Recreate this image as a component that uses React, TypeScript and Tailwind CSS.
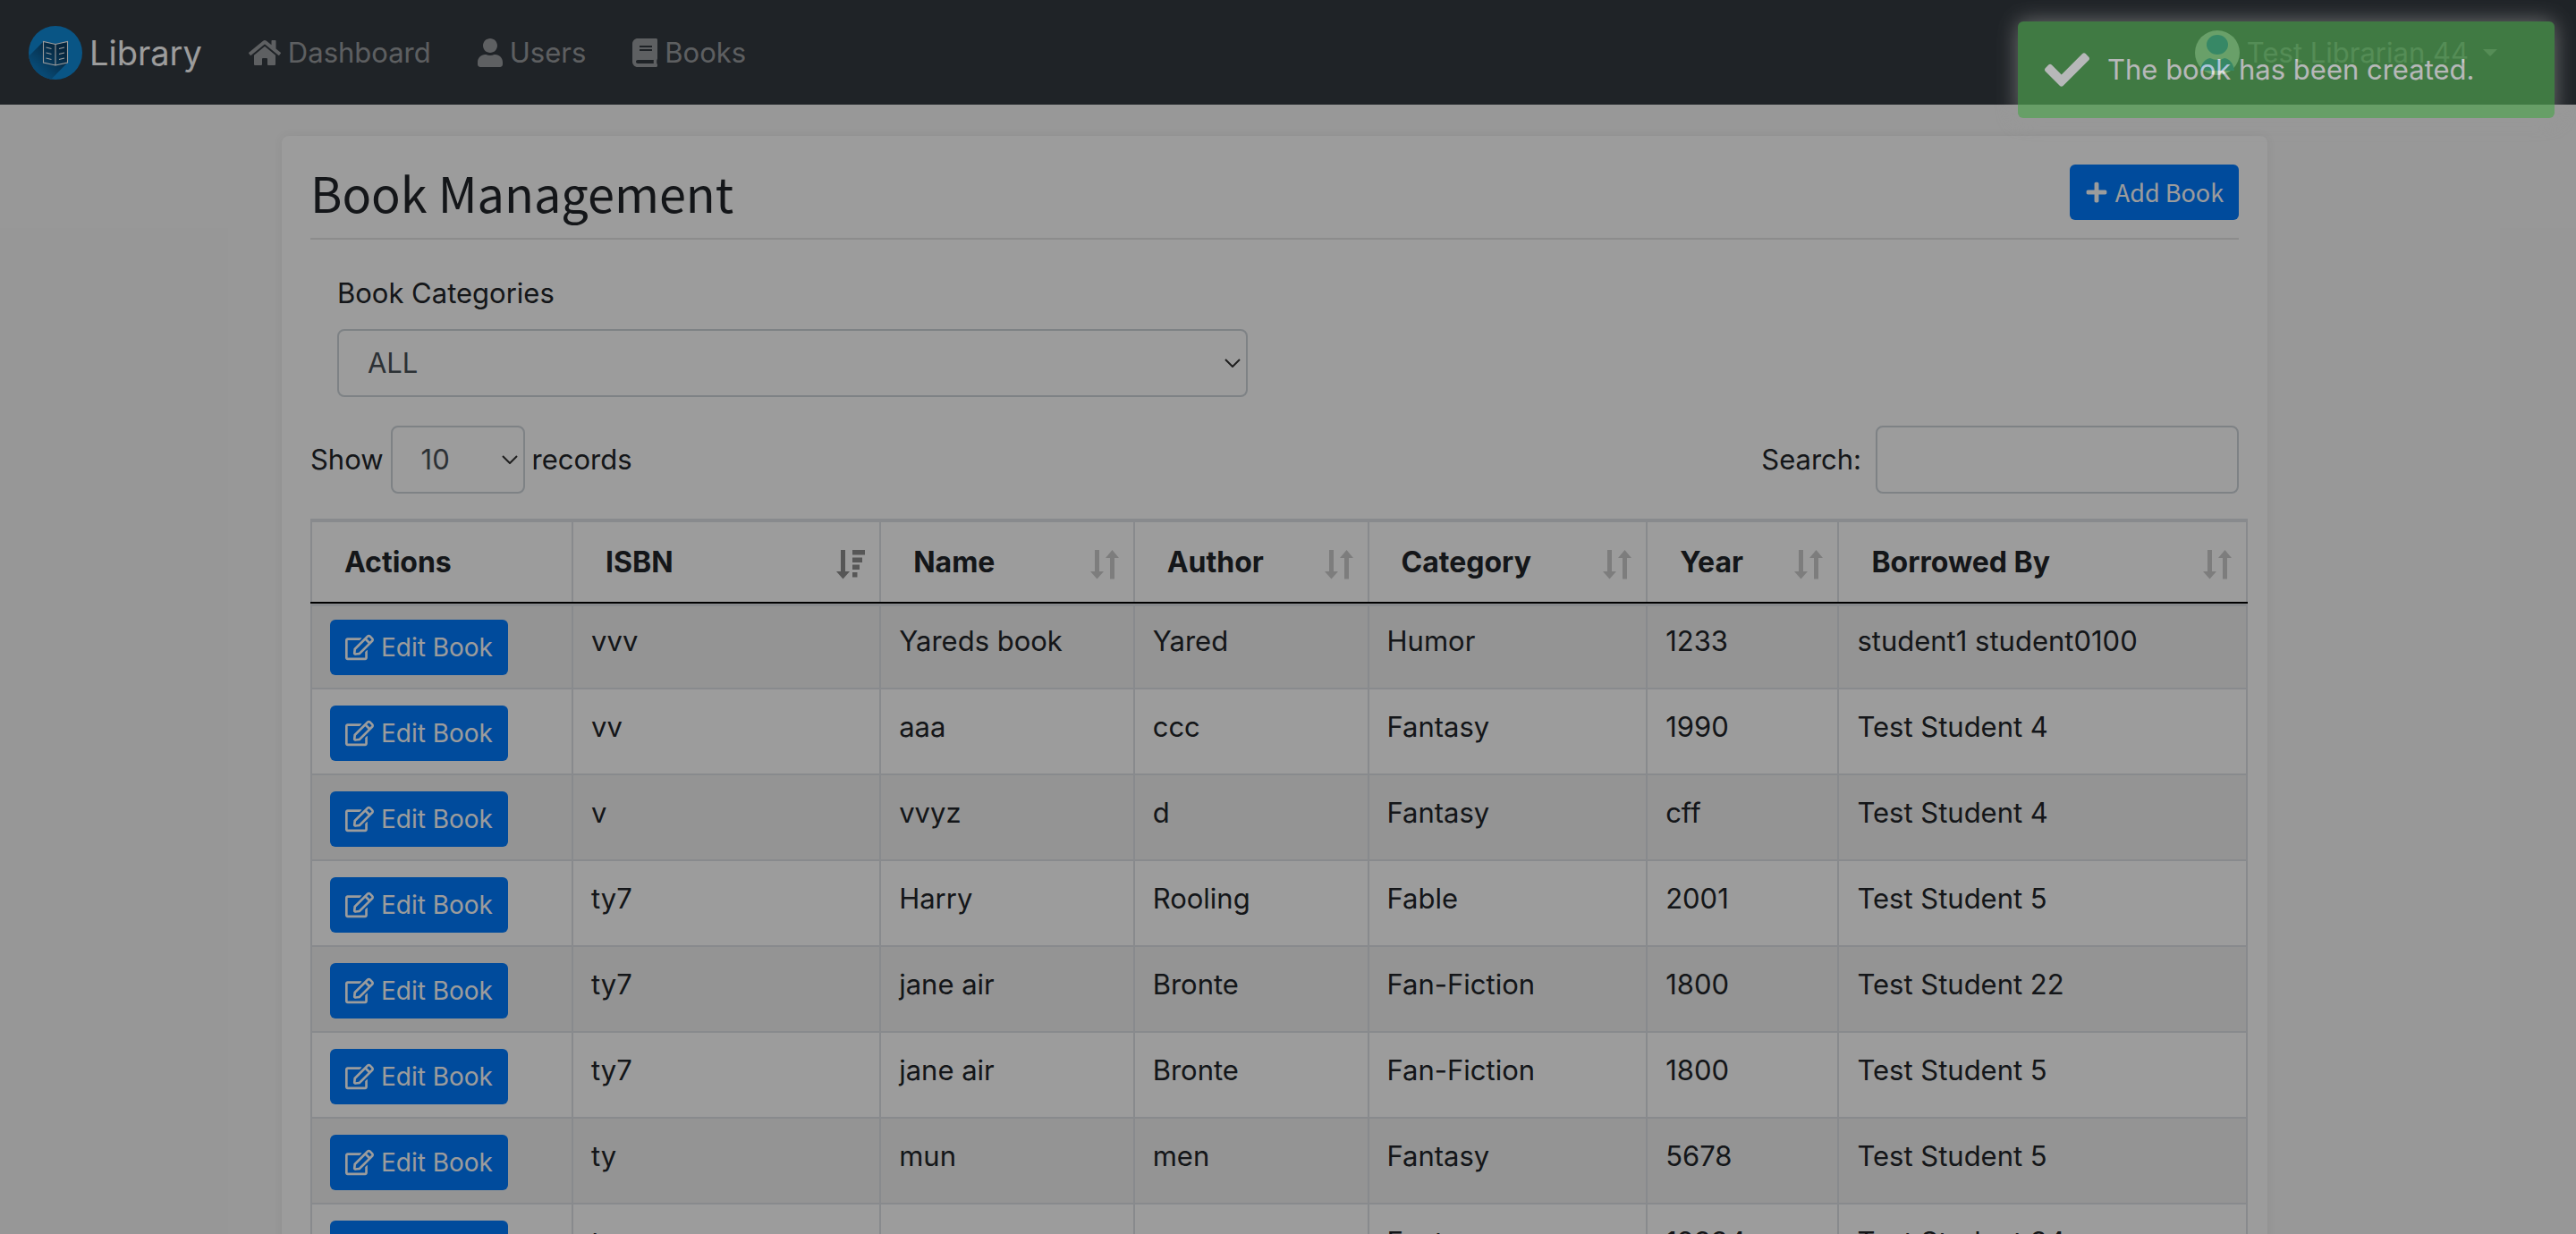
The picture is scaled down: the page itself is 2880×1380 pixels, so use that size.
import type { ReactNode } from "react";
import {
  FaBook,
  FaCheck,
  FaHome,
  FaPlus,
  FaRegEdit,
  FaUser,
} from "react-icons/fa";

type Book = {
  isbn: string;
  name: string;
  author: string;
  category: string;
  year: string;
  borrower: string;
};

const books: Book[] = [
  { isbn: "vvv", name: "Yareds book", author: "Yared", category: "Humor", year: "1233", borrower: "student1 student0100" },
  { isbn: "vv", name: "aaa", author: "ccc", category: "Fantasy", year: "1990", borrower: "Test Student 4" },
  { isbn: "v", name: "vvyz", author: "d", category: "Fantasy", year: "cff", borrower: "Test Student 4" },
  { isbn: "ty7", name: "Harry", author: "Rooling", category: "Fable", year: "2001", borrower: "Test Student 5" },
  { isbn: "ty7", name: "jane air", author: "Bronte", category: "Fan-Fiction", year: "1800", borrower: "Test Student 22" },
  { isbn: "ty7", name: "jane air", author: "Bronte", category: "Fan-Fiction", year: "1800", borrower: "Test Student 5" },
  { isbn: "ty", name: "mun", author: "men", category: "Fantasy", year: "5678", borrower: "Test Student 5" },
  { isbn: "tx", name: "sun", author: "sen", category: "Fantasy", year: "12334", borrower: "Test Student 34" },
];

const columns = [
  { label: "Actions", width: "w-[13.5%]", sort: "none" },
  { label: "ISBN", width: "w-[15.9%]", sort: "desc" },
  { label: "Name", width: "w-[13.1%]", sort: "both" },
  { label: "Author", width: "w-[12.1%]", sort: "both" },
  { label: "Category", width: "w-[14.4%]", sort: "both" },
  { label: "Year", width: "w-[9.9%]", sort: "both" },
  { label: "Borrowed By", width: "w-[21.1%]", sort: "both" },
];

function Logo() {
  return (
    <svg viewBox="0 0 60 60" className="size-15" aria-hidden="true">
      <defs>
        <linearGradient id="logo-shadow" gradientUnits="userSpaceOnUse" x1="34" y1="26" x2="12" y2="50">
          <stop offset="0" stopColor="#0a3f66" />
          <stop offset="1" stopColor="#0e78bd" />
        </linearGradient>
        <clipPath id="logo-clip">
          <circle cx="30" cy="30" r="30" />
        </clipPath>
      </defs>
      <circle cx="30" cy="30" r="30" fill="#108bda" />
      <path d="M16.500 17.500 L30 20.500 L43.500 17.500 V41 L24 61 H0 V34 Z" fill="url(#logo-shadow)" clipPath="url(#logo-clip)" />
      <g fill="none" stroke="#fff" strokeWidth="1.1">
        <path d="M30 20.500 L16.500 17.500 V41 L30 44 L43.500 41 V17.500 Z M30 20.500 V44" />
        <path d="M19.500 24 l6 1.500 M19.500 30 l6 1.500 M19.500 36 l6 1.500 M40 24 l-6 1.500 M40 30 l-6 1.500 M40 36 l-6 1.500" />
      </g>
    </svg>
  );
}

function Avatar() {
  return (
    <svg viewBox="0 0 50 50" className="size-[50px]" aria-hidden="true">
      <circle cx="25" cy="25" r="25" fill="#fff" />
      <ellipse cx="25" cy="16" rx="12" ry="11" fill="#0082f0" />
      <path d="M6 45 C7 37 11 32 17 31 Q25 35 33 31 C39 32 43 37 44 45 Z" fill="#0082f0" />
    </svg>
  );
}

function SortBoth() {
  return (
    <svg viewBox="0 0 32 34" className="mt-1 h-[34px] w-8 text-[#cdcdcd]" fill="currentColor" aria-hidden="true">
      <path d="M5 1h5v24h5l-7.500 8.500L0 25h5zM22 33.500h5V10h5L24.500 1 17 10h5z" />
    </svg>
  );
}

function SortDesc() {
  return (
    <svg viewBox="0 0 32 34" className="mt-1 h-[34px] w-8 text-[#8f8f8f]" fill="currentColor" aria-hidden="true">
      <path d="M5 1h5v24h5l-7.500 8.500L0 25h5zM18 1h14v5.500H18zM18 9.500h11V15H18zM18 17.500h8V23h-8zM18 26h5.500v5.500H18z" />
    </svg>
  );
}

function NavLink({ icon, children }: { icon: ReactNode; children: ReactNode }) {
  return (
    <a href="#" className="flex items-center gap-2 text-white/50">
      {icon}
      {children}
    </a>
  );
}

function Chevron() {
  return (
    <svg viewBox="0 0 18 10" className="pointer-events-none absolute top-1/2 right-2 h-2.5 w-[18px] -translate-y-1/2" fill="none" stroke="#333" strokeWidth="2" aria-hidden="true">
      <path d="M1 1l8 8 8-8" />
    </svg>
  );
}

const field = "h-[76px] rounded-lg border-2 border-[#ced4da] bg-white text-[#495057]";

export default function App() {
  return (
    <div className="relative h-screen overflow-hidden bg-[#f8f8f8] font-['Inter','Liberation_Sans',sans-serif] text-[31px] leading-12 text-[#212529]">
      <header className="flex h-[117px] items-center bg-[#343a40] px-8">
        <a href="#" className="flex items-center gap-2 text-[38px] text-white">
          <Logo />
          Library
        </a>
        <nav className="ml-13 flex items-center gap-[52px]">
          <NavLink icon={<FaHome className="size-9" />}>Dashboard</NavLink>
          <NavLink icon={<FaUser className="h-8 w-7" />}>Users</NavLink>
          <NavLink icon={<FaBook className="h-8 w-7" />}>Books</NavLink>
        </nav>
        <button type="button" className="mr-14 ml-auto flex items-center gap-2 text-white/50">
          <Avatar />
          Test Librarian 44
          <span className="ml-2 border-x-8 border-t-8 border-x-transparent border-t-current" />
        </button>
      </header>

      <div className="pt-[35px] pr-[30px]">
        <main className="mx-auto w-[77.9%] rounded-lg bg-white px-8 pt-8 shadow-[0_0_12px_rgba(0,0,0,0.06)]">
          <div className="flex items-start justify-between border-b-2 border-black/10 pb-5 font-['Noto_Sans_CJK_JP',sans-serif]">
            <h1 className="text-[54px] leading-[62px]">Book Management</h1>
            <button type="button" className="flex h-[62px] items-center gap-2 rounded-md bg-[#007bff] px-[17px] text-[27px] text-white">
              <FaPlus className="size-[26px]" />
              Add Book
            </button>
          </div>

          <div className="mt-9 flex w-1/2 flex-col px-[30px]">
            <label htmlFor="category" className="mb-4">Book Categories</label>
            <div className="relative">
              <select id="category" className={`${field} w-full appearance-none px-8`}>
                <option>ALL</option>
              </select>
              <Chevron />
            </div>
          </div>

          <div className="mt-8 flex items-center justify-between">
            <div className="flex items-center gap-2">
              <label htmlFor="length">Show</label>
              <div className="relative">
                <select id="length" className={`${field} w-[150px] appearance-none px-8`}>
                  <option>10</option>
                </select>
                <Chevron />
              </div>
              <span>records</span>
            </div>
            <div className="flex items-center gap-4">
              <label htmlFor="search">Search:</label>
              <input id="search" type="search" className={`${field} w-[406px] px-6`} />
            </div>
          </div>

          <table className="mt-7 w-[calc(100%+10px)] table-fixed border-collapse border-2 border-[#dee2e6]">
            <thead>
              <tr>
                {columns.map((c) => (
                  <th key={c.label} className={`${c.width} h-[92px] border-x-2 border-t-4 border-b-2 border-[#dee2e6] border-b-black pr-4 pl-9 text-left text-[32px] font-bold`}>
                    <div className="flex items-center justify-between">
                      {c.label}
                      {c.sort === "both" && <SortBoth />}
                      {c.sort === "desc" && <SortDesc />}
                    </div>
                  </th>
                ))}
              </tr>
            </thead>
            <tbody>
              {books.map((b, i) => (
                <tr key={i} className="h-24 border-b-2 border-[#dee2e6] align-top odd:bg-[#f2f2f2] first:*:shadow-[inset_0_3px_#dee2e6]">
                  <td className="border-x-2 border-[#dee2e6] px-5 pt-4.5">
                    <button type="button" className="flex h-[62px] items-center gap-2 rounded-md bg-[#007bff] px-[17px] text-[28px] text-white">
                      <FaRegEdit className="size-8" />
                      Edit Book
                    </button>
                  </td>
                  {[b.isbn, b.name, b.author, b.category, b.year, b.borrower].map((v, j) => (
                    <td key={j} className="border-x-2 border-[#dee2e6] px-5 pt-4.5">{v}</td>
                  ))}
                </tr>
              ))}
            </tbody>
          </table>
        </main>
      </div>

      <div className="absolute inset-0 bg-black/39" />
      <div role="alert" className="absolute top-6 right-6 flex h-[108px] w-[600px] items-center gap-5 rounded-md bg-[#51a351] px-[30px] text-white opacity-68 shadow-[0_0_24px_#999]">
        <FaCheck className="size-[50px]" />
        The book has been created.
      </div>
    </div>
  );
}
